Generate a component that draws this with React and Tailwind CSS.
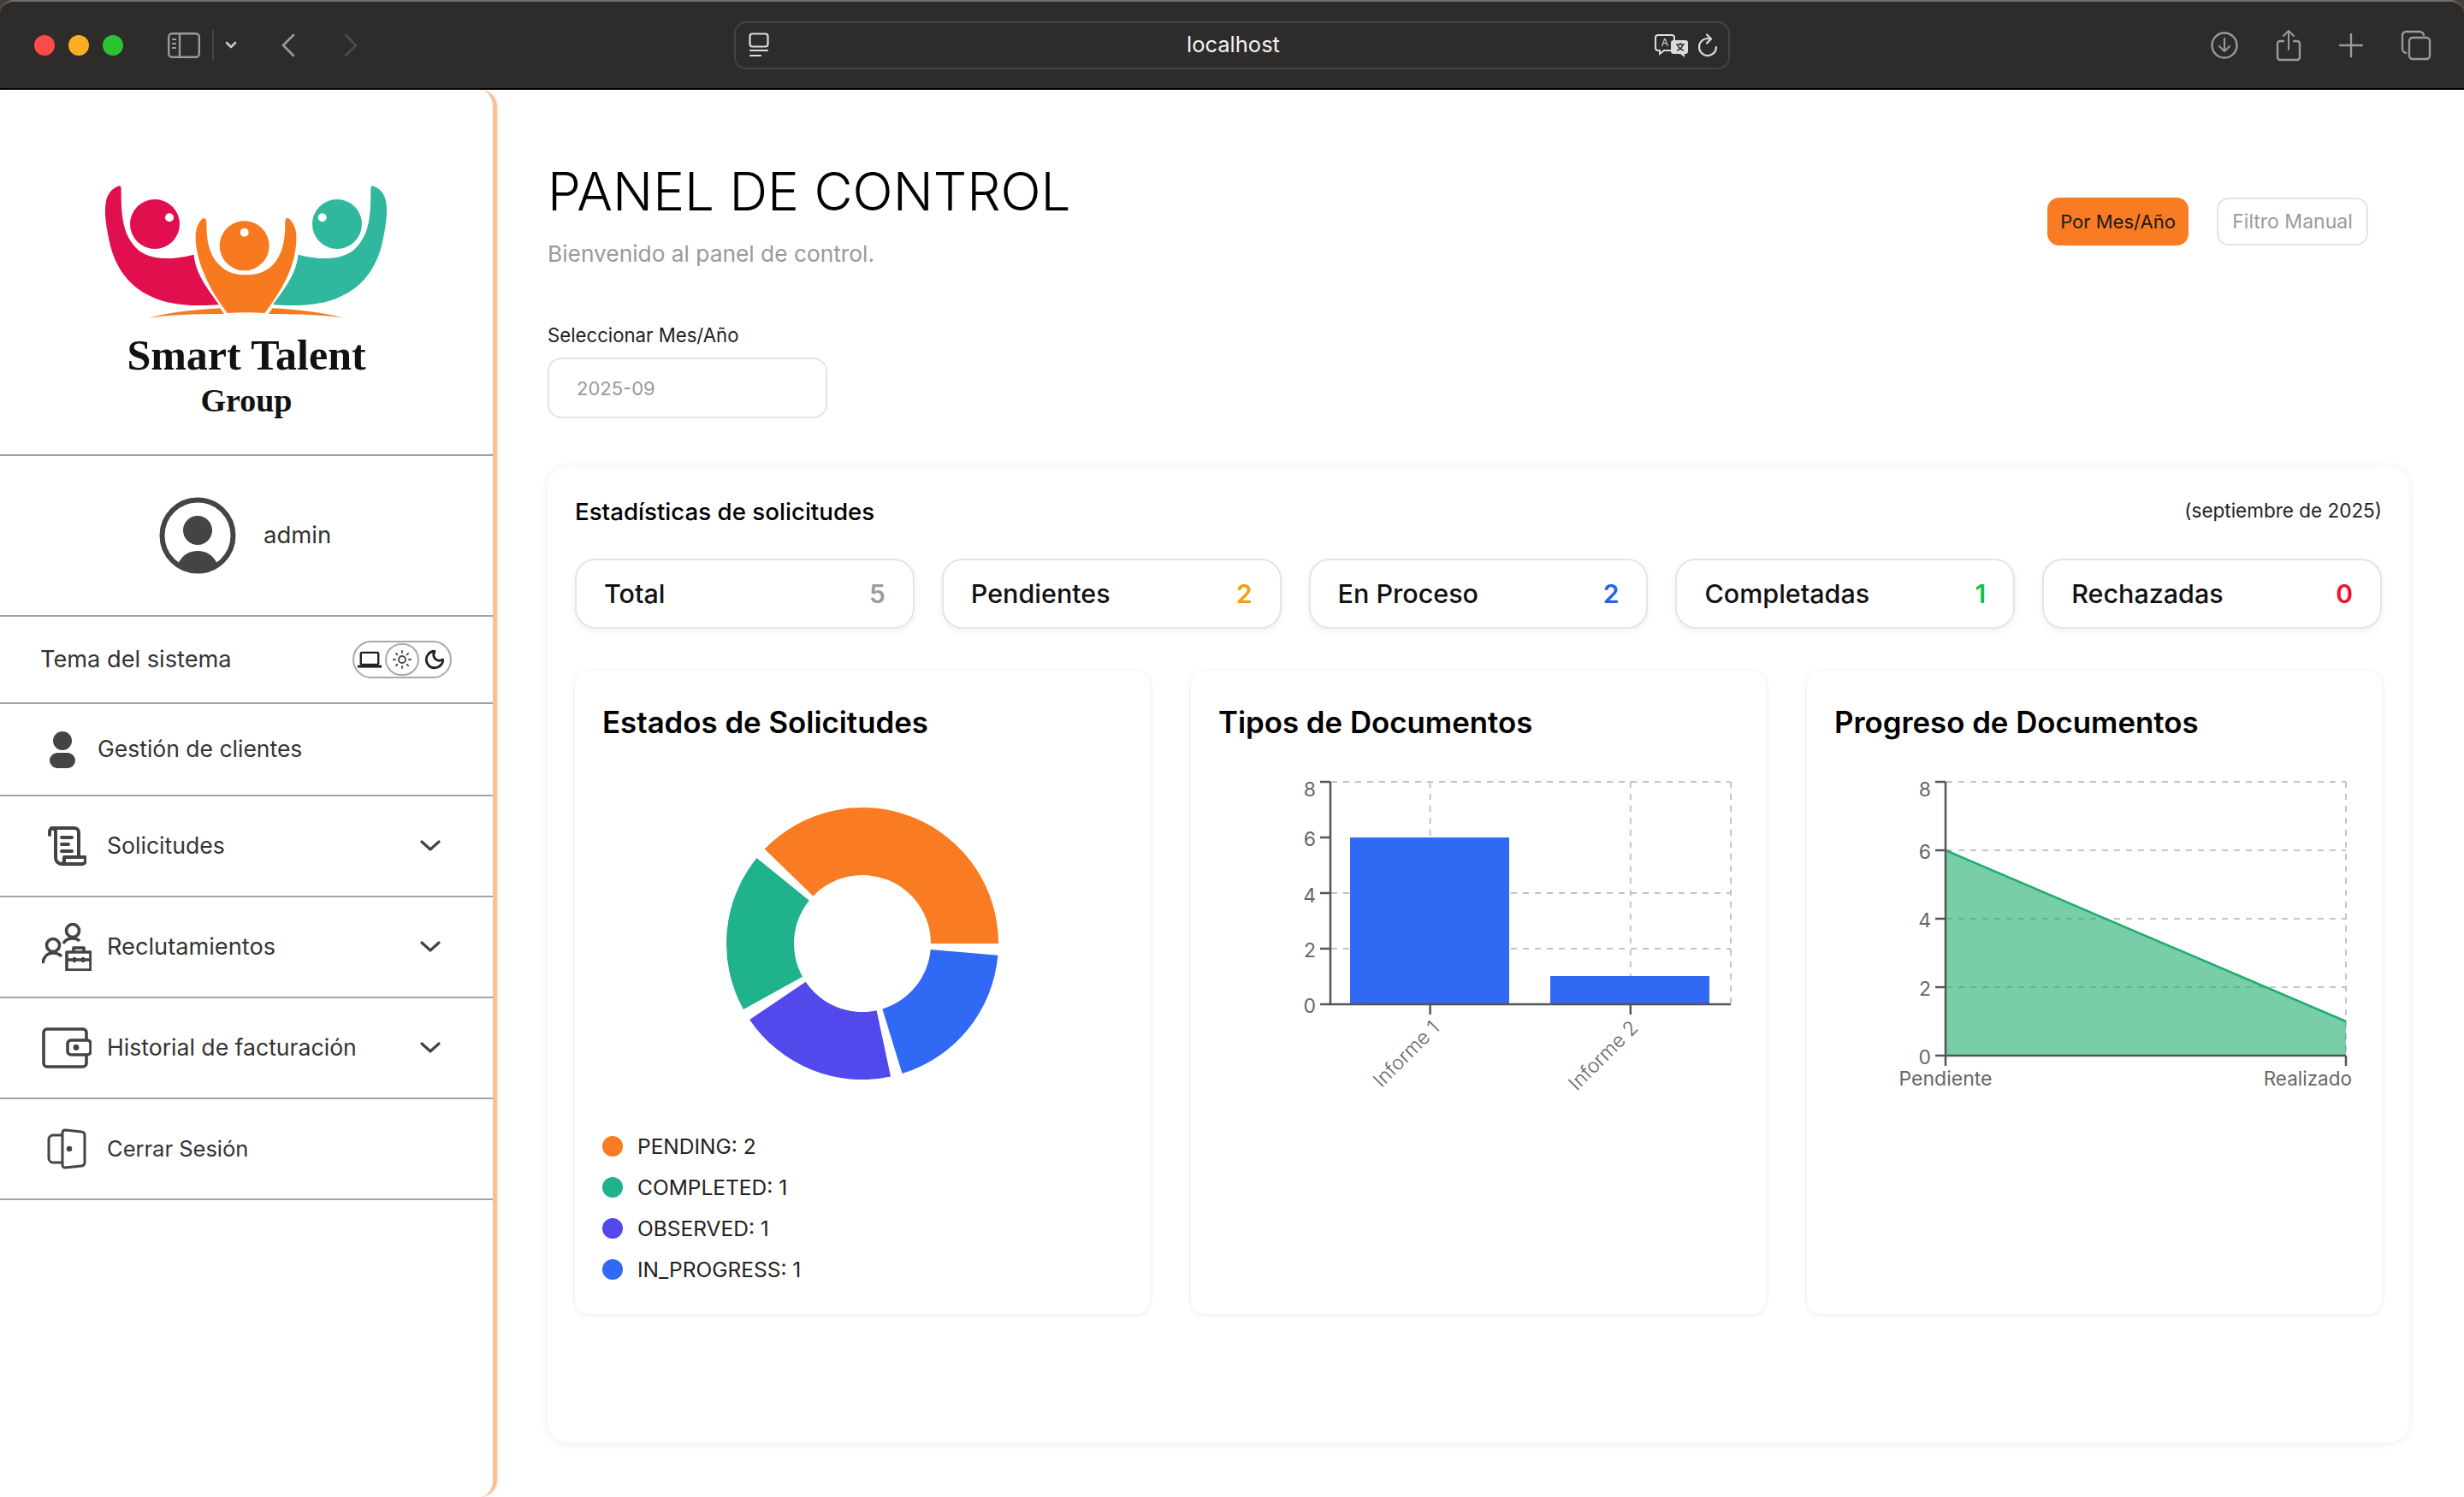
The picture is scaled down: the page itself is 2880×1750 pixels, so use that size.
import { Moon, Sun } from 'lucide-react';

const font = "font-['Inter','Noto_Sans',sans-serif]";

const stats = [
  { label: 'Total', value: 5, color: 'text-[#9b9b9b]' },
  { label: 'Pendientes', value: 2, color: 'text-[#f59e0b]' },
  { label: 'En Proceso', value: 2, color: 'text-[#2563eb]' },
  { label: 'Completadas', value: 1, color: 'text-[#0fbf45]' },
  { label: 'Rechazadas', value: 0, color: 'text-[#f00f2f]' },
];

const slices = [
  { from: 0, to: 136, color: '#f97b22' },
  { from: 141, to: 209, color: '#20b28a' },
  { from: 214, to: 282, color: '#5149ec' },
  { from: 287, to: 355, color: '#2f69f4' },
];

const legend = [
  { label: 'PENDING: 2', color: 'bg-[#f97b22]' },
  { label: 'COMPLETED: 1', color: 'bg-[#20b28a]' },
  { label: 'OBSERVED: 1', color: 'bg-[#5149ec]' },
  { label: 'IN_PROGRESS: 1', color: 'bg-[#2f69f4]' },
];

function slicePath({ from, to }) {
  const cx = 1008, cy = 1103, R = 159, r = 80;
  const pt = (rad, deg) => {
    const a = (deg * Math.PI) / 180;
    return `${cx + rad * Math.cos(a)} ${cy - rad * Math.sin(a)}`;
  };
  return `M${pt(R, from)} A${R} ${R} 0 0 0 ${pt(R, to)} L${pt(r, to)} A${r} ${r} 0 0 1 ${pt(r, from)} Z`;
}

function Logo() {
  const arm = 'M118 82C125 80 125 90 125 105C125 180 130 240 165 285C200 335 270 350 380 323C385 390 430 445 468 498C420 503 340 505 270 485C170 455 105 385 82 270C70 210 65 170 72 135C78 105 98 88 118 82Z';
  return (
    <svg viewBox="0 0 1140 600" className="w-[380px] h-[200px] ml-[3px]">
      <path d={arm} fill="#e20f4f" />
      <path d={arm} fill="#2fb89e" transform="matrix(-1 0 0 1 1125 0)" />
      <path d="M412 196C422 194 424 200 424 215C424 270 432 320 465 355C495 388 530 394 560 394C600 394 640 385 668 345C692 310 700 270 700 215C700 198 702 193 712 196C725 205 740 230 739 260C740 340 710 420 628 528C580 525 540 525 497 528C430 440 385 340 386 260C386 230 398 205 412 196Z" fill="#f87a20" />
      <circle cx="243" cy="216" r="87" fill="#e20f4f" />
      <circle cx="882" cy="216" r="87" fill="#2fb89e" />
      <circle cx="557" cy="292" r="87" fill="#f87a20" />
      <circle cx="294" cy="193" r="15" fill="#fff" />
      <circle cx="830" cy="193" r="15" fill="#fff" />
      <circle cx="557" cy="245" r="15" fill="#fff" />
      <path d="M222 545C290 525 380 515 472 511L486 531C400 531 300 533 222 545Z" fill="#f87a20" />
      <path d="M642 531L655 511C740 515 830 525 905 545C830 533 730 531 642 531Z" fill="#f87a20" />
    </svg>
  );
}

function Chevron() {
  return (
    <svg viewBox="0 0 24 14" className="w-[24px] h-[14px] ml-auto mr-[61px]" fill="none" stroke="#444" strokeWidth="3.2" strokeLinecap="round" strokeLinejoin="round">
      <path d="M2 2l10 9 10-9" />
    </svg>
  );
}

function ScrollIcon() {
  return (
    <svg viewBox="0 0 46 46" className="w-[46px] h-[46px]" fill="none" stroke="#444" strokeWidth="4" strokeLinejoin="round" strokeLinecap="round">
      <path d="M3 9V5a3.5 3.5 0 0 1 7 0v31a7 7 0 0 0 7 7h24a4 4 0 0 0 4-4v-4H20v4a4 4 0 0 1-3 4" transform="translate(0 1)" />
      <path d="M5 2h27a5 5 0 0 1 5 5v28" />
      <path d="M17 13h12M17 21h8M17 29h12" />
    </svg>
  );
}

function RecruitIcon() {
  return (
    <svg viewBox="0 0 58 56" className="w-[58px] h-[56px]" fill="none" stroke="#444" strokeWidth="3.6" strokeLinejoin="round">
      <circle cx="36" cy="9" r="7.5" />
      <path d="M25 24c2-4 6-6 11-6 3 0 6 1 8 3" />
      <circle cx="13" cy="26" r="7.5" />
      <path d="M1 47c1-8 6-12 12-12 4 0 7 1 10 4" />
      <rect x="29" y="34" width="28" height="21" />
      <path d="M37 34v-5h12v5M29 43h28M38 40v6M48 40v6" />
    </svg>
  );
}

function WalletIcon() {
  return (
    <svg viewBox="0 0 58 48" className="w-[58px] h-[48px]" fill="none" stroke="#444" strokeWidth="3.6" strokeLinejoin="round">
      <path d="M52 14V6a4 4 0 0 0-4-4H6a4 4 0 0 0-4 4v36a4 4 0 0 0 4 4h42a4 4 0 0 0 4-4v-9" />
      <rect x="30" y="15" width="27" height="17" rx="4" />
      <circle cx="40" cy="23.5" r="1.6" fill="#444" />
    </svg>
  );
}

function DoorIcon() {
  return (
    <svg viewBox="0 0 46 48" className="w-[46px] h-[48px]" fill="none" stroke="#444" strokeWidth="3" strokeLinejoin="round">
      <path d="M18 8H7a5 5 0 0 0-5 5v22a5 5 0 0 0 5 5h11" />
      <path d="M18 5a3 3 0 0 1 3-3l19 2a4 4 0 0 1 4 4v32a4 4 0 0 1-4 4l-19 2a3 3 0 0 1-3-3Z" />
      <circle cx="26" cy="24" r="1.8" fill="#444" />
    </svg>
  );
}

function NavRow({ icon, label, arrow, size = 'text-[26.6px]' }) {
  return (
    <div className="flex items-center h-[118px] pl-[49px] border-b-2 border-[#a3a3a3] shrink-0">
      <div className="w-[58px] flex justify-center shrink-0">{icon}</div>
      <span className={`ml-[18px] text-[#333] ${size}`}>{label}</span>
      {arrow && <Chevron />}
    </div>
  );
}

function Sidebar() {
  return (
    <aside className="w-[581px] shrink-0 bg-white border-r-[5px] border-[#fcbf95] rounded-r-[20px] flex flex-col shadow-[1px_0_3px_rgba(249,123,34,0.2)]">
      <div className="h-[428px] pt-[85px] border-b-2 border-[#a3a3a3] flex flex-col items-center shrink-0">
        <Logo />
        <div className="font-['Liberation_Serif',serif] font-bold text-[#111] text-[50px] leading-[50px]">Smart Talent</div>
        <div className="font-['Liberation_Serif',serif] font-bold text-[#111] text-[38px] leading-[44px] mt-[6px]">Group</div>
      </div>

      <div className="h-[188px] pl-[186px] border-b-2 border-[#a3a3a3] flex items-center shrink-0">
        <svg viewBox="0 0 90 90" className="w-[90px] h-[90px]">
          <circle cx="45" cy="45" r="41.5" fill="none" stroke="#444" strokeWidth="6" />
          <circle cx="45" cy="39" r="17" fill="#444" />
          <path d="M22 78C27 68 35 63 45 63C55 63 63 68 68 78C62 84 54 87 45 87C36 87 28 84 22 78Z" fill="#444" />
        </svg>
        <span className="ml-[32px] text-[27.5px] text-[#333]">admin</span>
      </div>

      <div className="h-[102px] pl-[47px] border-b-2 border-[#a3a3a3] flex items-center shrink-0">
        <span className="text-[27.2px] text-[#333]">Tema del sistema</span>
        <div className="ml-auto mr-[48px] w-[116px] h-[44px] rounded-full border-2 border-[#a8a8a8] flex items-center">
          <svg viewBox="0 0 26 18" className="w-[28px] h-[20px] ml-[4px]" fill="none" stroke="#222" strokeWidth="2.2">
            <rect x="3.5" y="1.5" width="19" height="13" rx="1" />
            <path d="M0 16.5h26" strokeWidth="2.8" />
          </svg>
          <div className="w-[40px] h-[38px] ml-[4px] rounded-full border-2 border-[#a8a8a8] flex items-center justify-center">
            <Sun size={24} color="#444" strokeWidth={1.8} />
          </div>
          <Moon size={26} color="#222" strokeWidth={2.6} className="ml-[5px]" />
        </div>
      </div>

      <div className="h-[108px] pl-[58px] border-b-2 border-[#a3a3a3] flex items-center shrink-0">
        <svg viewBox="0 0 30 43" className="w-[30px] h-[43px]" fill="#444">
          <ellipse cx="15" cy="11" rx="11" ry="11" />
          <rect x="0" y="25" width="30" height="18" rx="9" />
        </svg>
        <span className="ml-[26px] text-[26.5px] text-[#333]">Gestión de clientes</span>
      </div>

      <NavRow icon={<ScrollIcon />} label="Solicitudes" arrow />
      <NavRow icon={<RecruitIcon />} label="Reclutamientos" arrow size="text-[27.2px]" />
      <NavRow icon={<WalletIcon />} label="Historial de facturación" arrow />
      <NavRow icon={<DoorIcon />} label="Cerrar Sesión" size="text-[25.5px]" />
    </aside>
  );
}

function TopBar() {
  return (
    <header className="h-[105px] shrink-0 bg-[#2d2c2a] rounded-t-[16px] border-t-2 border-[#6f6e6c] border-b-2 border-b-black flex items-center">
      <div className="w-[858px] shrink-0 flex items-center pl-[40px]">
        <span className="w-[24px] h-[24px] rounded-full bg-[#ff4a4a]" />
        <span className="w-[24px] h-[24px] rounded-full bg-[#ffae23] ml-[16px]" />
        <span className="w-[24px] h-[24px] rounded-full bg-[#2ac331] ml-[16px]" />
        <svg viewBox="0 0 38 30" className="w-[38px] h-[30px] ml-[52px]" fill="none" stroke="#9a9a9a" strokeWidth="2.4">
          <rect x="1.2" y="1.2" width="35.6" height="27.6" rx="4" />
          <path d="M14 1.5v27" />
          <path d="M5 8h5M5 13h5M5 18h5" strokeWidth="1.8" />
        </svg>
        <span className="w-[2px] h-[36px] bg-[#444] ml-[14px]" />
        <svg viewBox="0 0 14 10" className="w-[14px] h-[10px] ml-[13px]" fill="none" stroke="#c9c9c9" strokeWidth="2.6" strokeLinecap="round" strokeLinejoin="round">
          <path d="M2 2l5 5 5-5" />
        </svg>
        <svg viewBox="0 0 16 28" className="w-[16px] h-[28px] ml-[52px]" fill="none" stroke="#9a9a9a" strokeWidth="2.6" strokeLinecap="round" strokeLinejoin="round">
          <path d="M14 2L2 14l12 12" />
        </svg>
        <svg viewBox="0 0 16 28" className="w-[16px] h-[28px] ml-[57px]" fill="none" stroke="#4d4d4d" strokeWidth="2.6" strokeLinecap="round" strokeLinejoin="round">
          <path d="M2 2l12 12L2 26" />
        </svg>
      </div>

      <div className="w-[1164px] h-[56px] shrink-0 rounded-[14px] border-2 border-[#444341] flex items-center pl-[15px] pr-[12px]">
        <svg viewBox="0 0 24 30" className="w-[24px] h-[30px]" fill="none" stroke="#dcdcdc" strokeWidth="2.2" strokeLinecap="round">
          <rect x="1.5" y="1.5" width="21" height="15" rx="3" />
          <path d="M2 21h20M2 27h12" />
        </svg>
        <span className="flex-1 text-center text-[25.5px] text-[#f2f2f2] pl-[50px]">localhost</span>
        <svg viewBox="0 0 40 28" className="w-[40px] h-[28px]">
          <path d="M4 2h16a3 3 0 0 1 3 3v12a3 3 0 0 1-3 3h-9l-5 4v-4H4a3 3 0 0 1-3-3V5a3 3 0 0 1 3-3Z" fill="#2d2c2a" stroke="#dcdcdc" strokeWidth="2" />
          <text x="12" y="15" fontSize="12" fill="#dcdcdc" textAnchor="middle" fontFamily="Inter">A</text>
          <path d="M22 8h14a3 3 0 0 1 3 3v10a3 3 0 0 1-3 3h-1v4l-5-4h-8a3 3 0 0 1-3-3V11a3 3 0 0 1 3-3Z" fill="#dcdcdc" />
          <path d="M25 13h10M30 11v2M33 13c-1 4-4 6-7 7M27 14c1 3 4 5 7 6" stroke="#2d2c2a" strokeWidth="1.5" fill="none" />
        </svg>
        <svg viewBox="0 0 24 28" className="w-[24px] h-[28px] ml-[10px]" fill="none" stroke="#dcdcdc" strokeWidth="2.2" strokeLinecap="round" strokeLinejoin="round">
          <path d="M15 6.5A10 10 0 1 0 22 16" />
          <path d="M11 1.5l5 5-5 5" />
        </svg>
      </div>

      <div className="flex items-center">
        <svg viewBox="0 0 32 34" className="w-[32px] h-[34px] ml-[562px]" fill="none" stroke="#9a9a9a" strokeWidth="2.4" strokeLinecap="round" strokeLinejoin="round">
          <circle cx="16" cy="17" r="14.5" />
          <path d="M16 9v15M10 18l6 6 6-6" strokeWidth="2" />
        </svg>
        <svg viewBox="0 0 30 38" className="w-[30px] h-[38px] ml-[44px]" fill="none" stroke="#9a9a9a" strokeWidth="2.4" strokeLinecap="round" strokeLinejoin="round">
          <path d="M9 14H5a3 3 0 0 0-3 3v16a3 3 0 0 0 3 3h20a3 3 0 0 0 3-3V17a3 3 0 0 0-3-3h-4" />
          <path d="M15 24V2M9 8l6-6 6 6" strokeWidth="2" />
        </svg>
        <svg viewBox="0 0 30 30" className="w-[30px] h-[30px] ml-[43px]" fill="none" stroke="#9a9a9a" strokeWidth="2.4" strokeLinecap="round">
          <path d="M15 2v26M2 15h26" />
        </svg>
        <svg viewBox="0 0 36 36" className="w-[36px] h-[36px] ml-[43px]" fill="none" stroke="#9a9a9a" strokeWidth="2.4" strokeLinejoin="round">
          <path d="M7 27a5 5 0 0 1-5-5V6a4 4 0 0 1 4-4h16a5 5 0 0 1 5 5" />
          <rect x="10" y="9" width="24" height="25" rx="4" />
        </svg>
      </div>
    </header>
  );
}

function ChartCard({ title, children }) {
  return (
    <div className="h-[752px] rounded-[16px] bg-white shadow-[0_1px_6px_rgba(0,0,0,0.09)]">
      <h3 className="px-[32px] pt-[38px] h-[83px] text-[34.8px] leading-[44px] font-semibold text-black">{title}</h3>
      {children}
    </div>
  );
}

const gridProps = { stroke: '#c4c4c4', strokeWidth: 2, strokeDasharray: '7 7', fill: 'none' };
const axisProps = { stroke: '#555', strokeWidth: 2.5, fill: 'none' };
const tickText = { fontSize: 23, fill: '#666', fontFamily: 'Inter' };

function DonutChart() {
  return (
    <>
      <svg viewBox="672 867 672 433" className="w-[672px] h-[433px]">
        {slices.map(s => <path key={s.from} d={slicePath(s)} fill={s.color} />)}
      </svg>
      <ul className="mt-[16px] pl-[32px]">
        {legend.map(l => (
          <li key={l.label} className="h-[48px] flex items-center gap-[17px]">
            <span className={`w-[24px] h-[24px] rounded-full ${l.color}`} />
            <span className="text-[24.5px] text-[#222]">{l.label}</span>
          </li>
        ))}
      </ul>
    </>
  );
}

function BarChart() {
  const ticks = [[8, 914, 923], [6, 979, 981], [4, 1044, 1047], [2, 1109, 1111], [0, 1174, 1176]];
  return (
    <svg viewBox="1391 867 672 433" className="w-[672px] h-[433px]">
      {[914, 1044, 1109].map(y => <path key={y} d={`M1555 ${y}H2022`} {...gridProps} />)}
      {[1670.6, 1904.8, 2022].map(x => <path key={x} d={`M${x} 914V1174`} {...gridProps} />)}
      <rect x="1577" y="979" width="186" height="195" fill="#2f69f4" />
      <rect x="1811" y="1141" width="186" height="33" fill="#2f69f4" />
      <path d="M1554 914V1174H2022" {...axisProps} />
      {ticks.map(([v, y, ty]) => (
        <g key={v}>
          <path d={`M1542 ${y}H1554`} {...axisProps} />
          <text x="1537" y={ty + 8} textAnchor="end" {...tickText}>{v}</text>
        </g>
      ))}
      <path d="M1670.6 1174V1186M1904.8 1174V1186" {...axisProps} />
      <text transform="translate(1683 1203) rotate(-45)" textAnchor="end" {...tickText} fontSize="23" fontWeight="300">Informe 1</text>
      <text transform="translate(1915 1203) rotate(-45)" textAnchor="end" {...tickText} fontSize="23" fontWeight="300">Informe 2</text>
    </svg>
  );
}

function AreaChart() {
  const ticks = [[8, 914, 923], [6, 994, 996], [4, 1074, 1076], [2, 1154, 1156], [0, 1234, 1236]];
  return (
    <svg viewBox="2112 867 672 433" className="w-[672px] h-[433px]">
      {[914, 994, 1074, 1154].map(y => <path key={y} d={`M2275 ${y}H2742`} {...gridProps} />)}
      <path d="M2742 914V1234" {...gridProps} />
      <path d="M2274 994L2742 1194V1234H2274Z" fill="#1ead6e" fillOpacity="0.6" />
      <path d="M2274 994L2742 1194" stroke="#1ead6e" strokeWidth="2.5" fill="none" />
      <path d="M2274 914V1234H2742" {...axisProps} />
      {ticks.map(([v, y, ty]) => (
        <g key={v}>
          <path d={`M2262 ${y}H2274`} {...axisProps} />
          <text x="2257" y={ty + 8} textAnchor="end" {...tickText}>{v}</text>
        </g>
      ))}
      <path d="M2274 1234V1246M2742 1234V1246" {...axisProps} />
      <text x="2274" y="1269" textAnchor="middle" {...tickText}>Pendiente</text>
      <text x="2749" y="1269" textAnchor="end" {...tickText} fontSize="22.5">Realizado</text>
    </svg>
  );
}

export default function App() {
  return (
    <div className={`w-[2880px] h-[1750px] bg-[#4a3d38] flex flex-col overflow-hidden ${font}`}>
      <TopBar />
      <div className="flex flex-1 min-h-0 bg-white">
        <Sidebar />
        <main className="flex-1 pl-[59px] pr-[64px] pt-[79px]">
          <div className="flex items-start justify-between pr-[48px]">
            <div>
              <h1 className="h-[80px] text-[62px] leading-[80px] font-[350] text-black">PANEL DE CONTROL</h1>
              <p className="mt-[15px] mb-[1px] h-[36px] text-[26.3px] leading-[36px] text-[#999]">Bienvenido al panel de control.</p>
            </div>
            <div className="mt-[47px] flex gap-[33px]">
              <button className="w-[165px] h-[56px] rounded-[14px] bg-[#f97b22] text-[22px] text-[#1a1a1a]">Por Mes/Año</button>
              <button className="w-[177px] h-[56px] rounded-[14px] border-2 border-[#e3e3e3] text-[23px] text-[#9b9b9b]">Filtro Manual</button>
            </div>
          </div>

          <label className="block mt-[58px] h-[36px] text-[22.2px] leading-[36px] text-[#222]">Seleccionar Mes/Año</label>
          <div className="mt-[8px] w-[327px] h-[71px] rounded-[16px] border-2 border-[#e3e3e3] pl-[32px] pt-[2px] flex items-center text-[22px] text-[#999]">2025-09</div>

          <section className="mt-[57px] h-[1140px] rounded-[24px] bg-white px-[32px] pt-[35px] shadow-[0_1px_12px_rgba(0,0,0,0.08)]">
            <div className="flex items-center justify-between h-[36px]">
              <h2 className="text-[27.7px] font-medium text-black">Estadísticas de solicitudes</h2>
              <span className="text-[22.5px] text-[#222] mb-[4px]">(septiembre de 2025)</span>
            </div>
            <div className="mt-[36px] grid grid-cols-5 gap-[32px]">
              {stats.map(s => (
                <div key={s.label} className="h-[82px] rounded-[24px] border-2 border-[#e5e5e5] bg-white px-[32px] flex items-center justify-between shadow-[0_3px_8px_rgba(0,0,0,0.06)]">
                  <span className="text-[30.5px] font-medium text-[#111]">{s.label}</span>
                  <span className={`text-[30px] font-semibold ${s.color}`}>{s.value}</span>
                </div>
              ))}
            </div>
            <div className="mt-[49px] grid grid-cols-3 gap-[48px]">
              <ChartCard title="Estados de Solicitudes"><DonutChart /></ChartCard>
              <ChartCard title="Tipos de Documentos"><BarChart /></ChartCard>
              <ChartCard title="Progreso de Documentos"><AreaChart /></ChartCard>
            </div>
          </section>
        </main>
      </div>
    </div>
  );
}
